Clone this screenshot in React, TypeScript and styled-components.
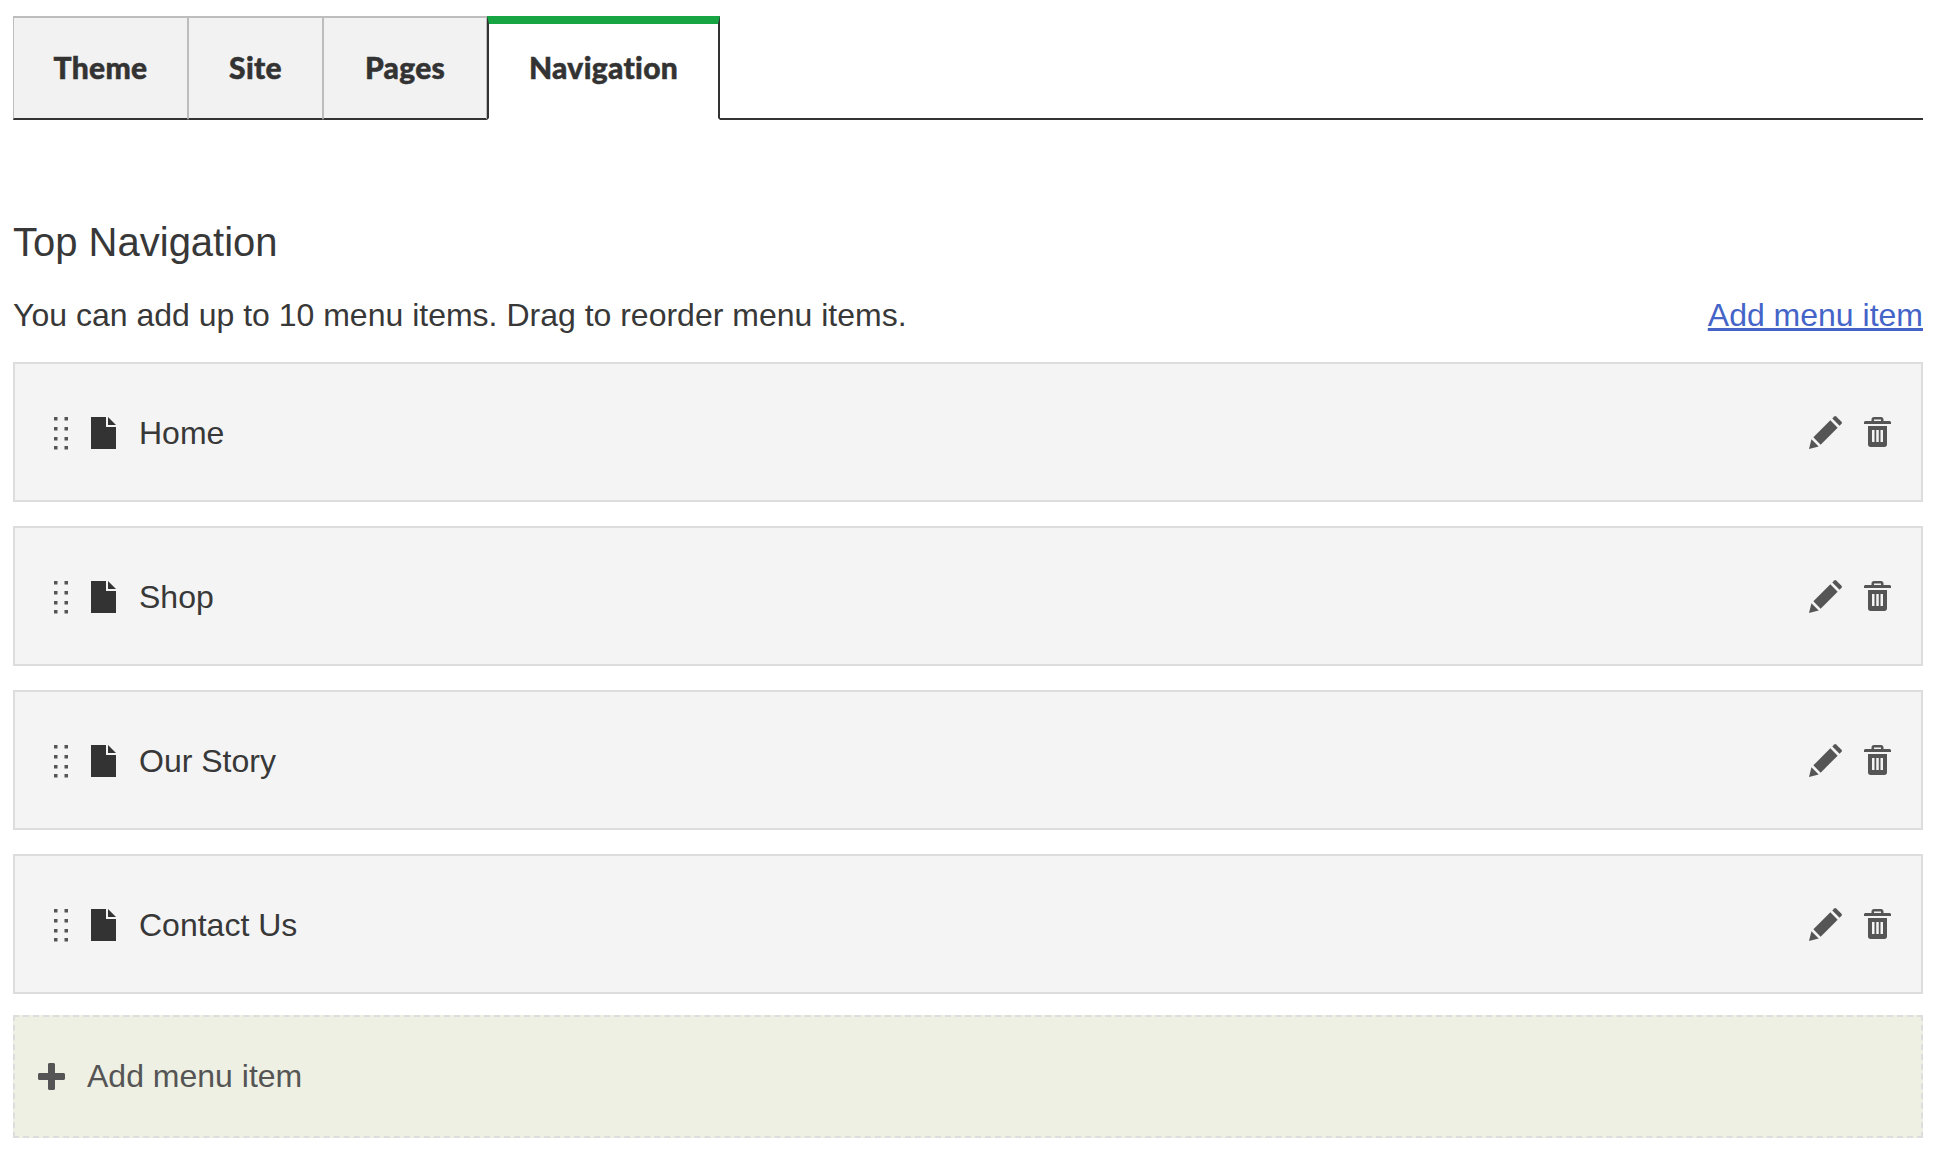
import React from 'react'
import styled, { createGlobalStyle } from 'styled-components'

const GlobalStyle = createGlobalStyle`
  html, body {
    margin: 0;
    padding: 0;
    background: #fff;
    font-family: "Liberation Sans", Arial, sans-serif;
    color: #333;
  }
`

const tabs = [
  { label: 'Theme', width: 175 },
  { label: 'Site', width: 135 },
  { label: 'Pages', width: 164 },
  { label: 'Navigation', width: 233, active: true },
]

const menuItems = ['Home', 'Shop', 'Our Story', 'Contact Us']

const FileIcon = () => (
  <svg width="25" height="32" viewBox="0 0 25 32">
    <path d="M0 0h15v10h10v22H0z" fill="#333" />
    <path d="M17 0l8 8h-8z" fill="#333" />
  </svg>
)

const DragIcon = () => (
  <svg width="14" height="33" viewBox="0 0 14 33" fill="#555">
    {[0, 10, 20, 29].map((y) => (
      <React.Fragment key={y}>
        <rect x="0" y={y} width="3.5" height="3.5" />
        <rect x="10.5" y={y} width="3.5" height="3.5" />
      </React.Fragment>
    ))}
  </svg>
)

const PencilIcon = () => (
  <svg width="33" height="33" viewBox="0 0 34 34" fill="#555">
    <path d="M0 34l2.500-10 7.500 7.500z" />
    <path d="M4.500 22L22 4.500l7.500 7.500L12 29.500z" />
    <path d="M24 2.500l2-2a1.500 1.500 0 0 1 2 0l5.500 5.500a1.500 1.500 0 0 1 0 2l-2 2z" />
  </svg>
)

const TrashIcon = () => (
  <svg width="27" height="30" viewBox="0 0 27 30" fill="#555">
    <path
      fillRule="evenodd"
      d="M0 5.500C0 4.500.8 4 1.500 4H7.500V2.500C7.500 1 8.500 0 10 0h7c1.500 0 2.500 1 2.500 2.500V4h6C26.200 4 27 4.500 27 5.500V7H0zM10 4h7V2.500h-7z"
    />
    <path
      fillRule="evenodd"
      d="M4 9h19v18.500c0 1.500-1 2.500-2.500 2.500h-14C5 30 4 29 4 27.500zM8 13v12h2.500V13zM12.250 13v12h2.500V13zM16.500 13v12H19V13z"
    />
  </svg>
)

const PlusIcon = () => (
  <svg width="27" height="27" viewBox="0 0 27 27" fill="#555">
    <path d="M10 1.500C10 .7 10.700 0 11.500 0h4c.8 0 1.500.7 1.500 1.500V10h8.500c.8 0 1.500.7 1.500 1.500v4c0 .8-.7 1.500-1.500 1.500H17v8.500c0 .8-.7 1.500-1.500 1.500h-4c-.8 0-1.500-.7-1.500-1.500V17H1.500C.7 17 0 16.300 0 15.500v-4C0 10.700.7 10 1.500 10H10z" />
  </svg>
)

export default function App() {
  return (
    <>
      <GlobalStyle />
      <Page>
        <TabBar>
          {tabs.map((tab) => (
            <Tab key={tab.label} $active={tab.active} $width={tab.width}>
              {tab.label}
            </Tab>
          ))}
        </TabBar>

        <Heading>Top Navigation</Heading>

        <IntroRow>
          <Intro>You can add up to 10 menu items. Drag to reorder menu items.</Intro>
          <AddLink href="#">Add menu item</AddLink>
        </IntroRow>

        <MenuList>
          {menuItems.map((item) => (
            <MenuRow key={item}>
              <DragHandle>
                <DragIcon />
              </DragHandle>
              <FileSlot>
                <FileIcon />
              </FileSlot>
              <MenuLabel>{item}</MenuLabel>
              <Actions>
                <PencilIcon />
                <TrashIcon />
              </Actions>
            </MenuRow>
          ))}
        </MenuList>

        <AddRow>
          <PlusIcon />
          <AddLabel>Add menu item</AddLabel>
        </AddRow>
      </Page>
    </>
  )
}

const Page = styled.div`
  width: 1910px;
  margin-left: 13px;
  padding-top: 16px;
`

const TabBar = styled.div`
  display: flex;
  height: 104px;
  box-sizing: border-box;
  border-bottom: 2px solid #333;
`

const Tab = styled.div<{ $active?: boolean; $width: number }>`
  box-sizing: border-box;
  width: ${(p) => p.$width}px;
  height: 104px;
  display: flex;
  align-items: center;
  justify-content: center;
  padding-bottom: ${(p) => (p.$active ? '8px' : '2px')};
  font-family: Lato, sans-serif;
  font-weight: 900;
  font-size: 30px;
  letter-spacing: 0.3px;
  -webkit-text-stroke: 0.5px #333;
  color: #333;
  background: ${(p) => (p.$active ? '#fff' : '#f2f2f2')};
  border-style: solid;
  border-color: ${(p) => (p.$active ? '#17a544 #333 #fff #333' : '#bdbdbd #bdbdbd #333 #bdbdbd')};
  border-width: ${(p) => (p.$active ? '8px 2px 2px 2px' : '2px 1px 2px 1px')};
`

const Heading = styled.h2`
  margin: 0;
  padding-top: 99px;
  font-size: 40px;
  line-height: 46px;
  font-weight: 400;
  color: #383838;
`

const IntroRow = styled.div`
  display: flex;
  justify-content: space-between;
  align-items: center;
  margin-top: 30px;
  height: 40px;
  font-size: 32px;
`

const Intro = styled.span`
  color: #383838;
`

const AddLink = styled.a`
  color: #4464c8;
  text-decoration: underline;
`

const MenuList = styled.div`
  display: flex;
  flex-direction: column;
  gap: 24px;
  margin-top: 27px;
`

const MenuRow = styled.div`
  box-sizing: border-box;
  height: 140px;
  display: flex;
  align-items: center;
  background: #f4f4f4;
  border: 2px solid #ddd;
  padding: 0 30px 0 39px;
`

const DragHandle = styled.div`
  display: flex;
  width: 37px;
  padding-top: 2px;
`

const FileSlot = styled.div`
  display: flex;
  width: 48px;
  padding-top: 2px;
`

const MenuLabel = styled.span`
  flex: 1;
  padding-top: 2px;
  font-size: 32px;
  color: #383838;
`

const Actions = styled.div`
  display: flex;
  align-items: center;
  gap: 22px;
`

const AddRow = styled.div`
  box-sizing: border-box;
  height: 123px;
  margin-top: 21px;
  display: flex;
  align-items: center;
  gap: 22px;
  background: #edf0e3;
  border: 2px dashed #ddd;
  padding: 0 0 1px 23px;
`

const AddLabel = styled.span`
  font-size: 32px;
  color: #555;
`
